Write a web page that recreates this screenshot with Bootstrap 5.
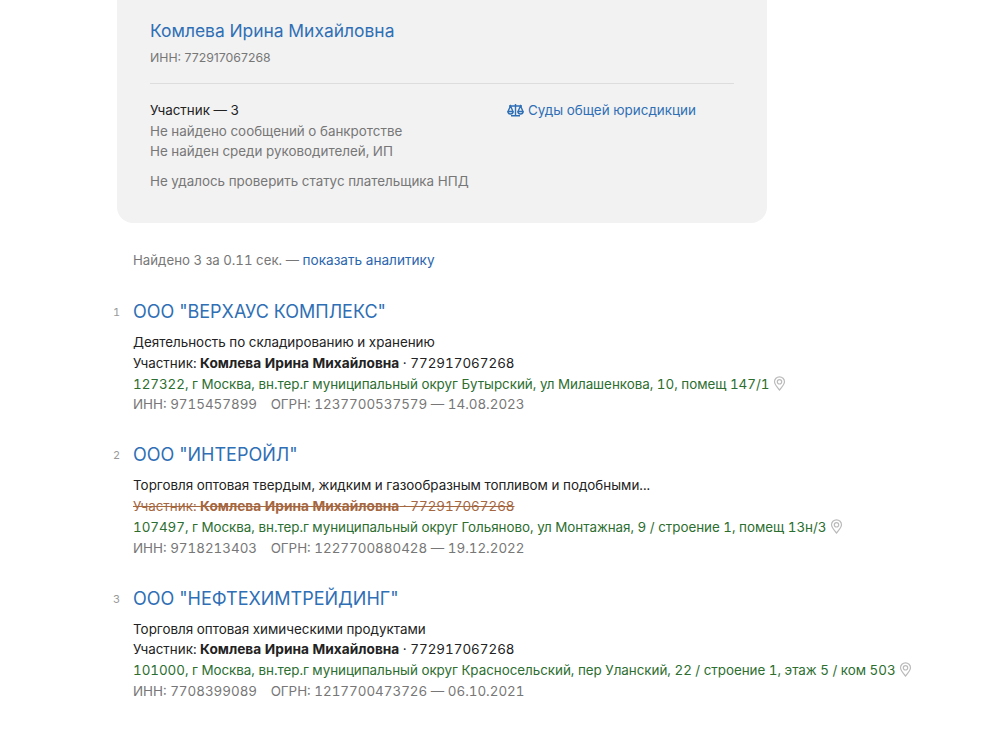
<!DOCTYPE html>
<html lang="ru">
<head>
<meta charset="utf-8">
<title>Результаты поиска</title>
<link href="https://cdn.jsdelivr.net/npm/bootstrap@5.3.0/dist/css/bootstrap.min.css" rel="stylesheet">
<style>
html,body{height:731px;overflow:hidden;}
body{font-family:Inter,"Noto Sans",sans-serif;font-size:13.4px;color:#222;background:#fff;font-variant-numeric:tabular-nums;}
a{text-decoration:none;color:#2a66ae;}
.person-box{margin-left:117px;width:650px;height:223px;background:#f2f2f2;border-radius:0 0 16px 16px;padding:19px 33px 0;}
.person-name{font-size:17.45px;line-height:24px;color:#2f6fb5;display:block;}
.person-inn{font-size:12.3px;line-height:18px;color:#777;margin-top:6px;font-variant-numeric:normal;}
.person-rule{border-top:1px solid #ddd;margin:16px 0 16px;}
.person-col{width:357px;}
.fact{line-height:20.5px;color:#777;font-size:13.4px;}
.fact-dark{color:#222;}
.fact-gap{margin-top:9px;}
.court-link{font-size:13.45px;line-height:20.500px;color:#2f6fb5;}
.found{margin:27px 0 0 133px;font-size:13.25px;line-height:20px;color:#777;}
.found a{color:#2a66ae;font-size:13.6px;}
.result{margin-top:30px;padding-left:133px;position:relative;}
.result + .result{margin-top:28.25px;}
.result-num{position:absolute;left:113px;top:5px;font-size:11px;color:#999;line-height:14px;}
.result-title{display:block;font-size:18px;line-height:24px;color:#2f6fb5;margin-bottom:8px;}
.result-line{line-height:20.75px;white-space:nowrap;}
.result-line b{font-size:13.7px;}
.addr{color:#2c6e2f;letter-spacing:-.03px;}
.meta{color:#777;}
.struck{color:#a5673f;text-decoration:line-through;}
.ogrn{margin-left:10px;}
.pin{vertical-align:-2px;}
</style>
</head>
<body>
<section class="person-box">
  <a class="person-name" href="#">Комлева Ирина Михайловна</a>
  <div class="person-inn">ИНН: 772917067268</div>
  <div class="person-rule"></div>
  <div class="d-flex">
    <div class="person-col">
      <div class="fact fact-dark">Участник — 3</div>
      <div class="fact">Не найдено сообщений о банкротстве</div>
      <div class="fact">Не найден среди руководителей, ИП</div>
      <div class="fact fact-gap">Не удалось проверить статус плательщика НПД</div>
    </div>
    <a class="court-link d-flex align-items-center gap-1 align-self-start" href="#">
      <svg width="17" height="15" viewBox="0 0 17 15" fill="none" stroke="#2f6fb5" stroke-width="1.4"><path d="M8.500 1v11M2 3h13M4 12.800h9"/><path d="M3.500 3 1 8.500h5L3.500 3zM13.500 3 11 8.500h5L13.500 3z"/><path d="M1 8.500a2.500 2.500 0 0 0 5 0M11 8.500a2.500 2.500 0 0 0 5 0"/></svg>
      <span>Суды общей юрисдикции</span>
    </a>
  </div>
</section>

<p class="found">Найдено 3 за 0.11 сек. — <a href="#">показать аналитику</a></p>

<article class="result">
  <span class="result-num">1</span>
  <a class="result-title" href="#">ООО "ВЕРХАУС КОМПЛЕКС"</a>
  <div class="result-line">Деятельность по складированию и хранению</div>
  <div class="result-line">Участник: <b>Комлева Ирина Михайловна</b> · 772917067268</div>
  <div class="result-line addr">127322, г Москва, вн.тер.г муниципальный округ Бутырский, ул Милашенкова, 10, помещ 147/1
    <svg class="pin" width="13" height="15" viewBox="0 0 13 15" fill="none" stroke="#bbb" stroke-width="1.2"><path d="M6.500 14C3.500 10.500 1.500 8.300 1.500 5.800a5 5 0 0 1 10 0c0 2.500-2 4.700-5 8.200z"/><circle cx="6.500" cy="5.800" r="2.200"/></svg></div>
  <div class="result-line meta">ИНН: 9715457899 <span class="ogrn">ОГРН: 1237700537579 — 14.08.2023</span></div>
</article>

<article class="result">
  <span class="result-num">2</span>
  <a class="result-title" href="#">ООО "ИНТЕРОЙЛ"</a>
  <div class="result-line">Торговля оптовая твердым, жидким и газообразным топливом и подобными...</div>
  <div class="result-line struck">Участник: <b>Комлева Ирина Михайловна</b> · 772917067268</div>
  <div class="result-line addr">107497, г Москва, вн.тер.г муниципальный округ Гольяново, ул Монтажная, 9 / строение 1, помещ 13н/3
    <svg class="pin" width="13" height="15" viewBox="0 0 13 15" fill="none" stroke="#bbb" stroke-width="1.2"><path d="M6.500 14C3.500 10.500 1.500 8.300 1.500 5.800a5 5 0 0 1 10 0c0 2.500-2 4.700-5 8.200z"/><circle cx="6.500" cy="5.800" r="2.200"/></svg></div>
  <div class="result-line meta">ИНН: 9718213403 <span class="ogrn">ОГРН: 1227700880428 — 19.12.2022</span></div>
</article>

<article class="result">
  <span class="result-num">3</span>
  <a class="result-title" href="#">ООО "НЕФТЕХИМТРЕЙДИНГ"</a>
  <div class="result-line">Торговля оптовая химическими продуктами</div>
  <div class="result-line">Участник: <b>Комлева Ирина Михайловна</b> · 772917067268</div>
  <div class="result-line addr">101000, г Москва, вн.тер.г муниципальный округ Красносельский, пер Уланский, 22 / строение 1, этаж 5 / ком 503
    <svg class="pin" width="13" height="15" viewBox="0 0 13 15" fill="none" stroke="#bbb" stroke-width="1.2"><path d="M6.500 14C3.500 10.500 1.500 8.300 1.500 5.800a5 5 0 0 1 10 0c0 2.500-2 4.700-5 8.200z"/><circle cx="6.500" cy="5.800" r="2.200"/></svg></div>
  <div class="result-line meta">ИНН: 7708399089 <span class="ogrn">ОГРН: 1217700473726 — 06.10.2021</span></div>
</article>
<script src="https://cdn.jsdelivr.net/npm/bootstrap@5.3.0/dist/js/bootstrap.bundle.min.js"></script>
</body>
</html>
